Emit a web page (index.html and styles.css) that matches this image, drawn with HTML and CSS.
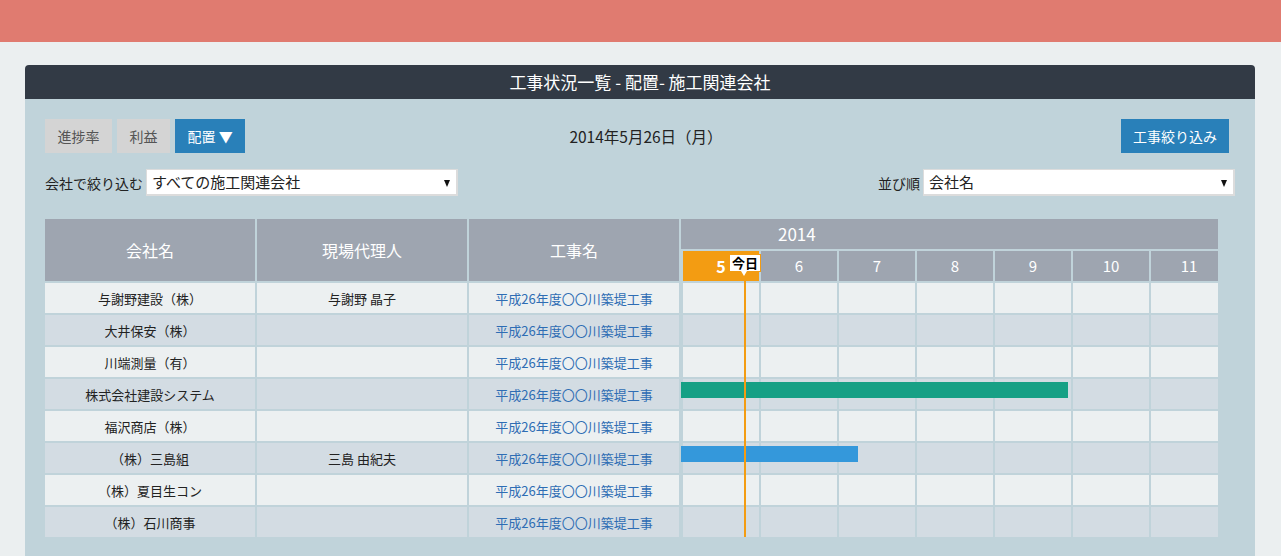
FILE: index.html
```html
<!DOCTYPE html>
<html lang="ja">
<head>
<meta charset="utf-8">
<title>工事状況一覧 - 配置- 施工関連会社</title>
<link rel="stylesheet" href="styles.css">
</head>
<body>
<header class="topbar"></header>
<main class="page">
  <section class="panel">
    <h1 class="panel-title">工事状況一覧 - 配置- 施工関連会社</h1>
    <div class="panel-body">
      <div class="toolbar">
        <div class="tabs">
          <button class="tab">進捗率</button>
          <button class="tab">利益</button>
          <button class="tab active">配置 ▼</button>
        </div>
        <div class="date">2014年5月26日（月）</div>
        <div class="tool-right"><button class="btn-primary">工事絞り込み</button></div>
      </div>
      <div class="filters">
        <div class="filter">
          <span class="filter-label">会社で絞り込む</span>
          <span class="select">すべての施工関連会社</span>
        </div>
        <div class="filter">
          <span class="filter-label">並び順</span>
          <span class="select">会社名</span>
        </div>
      </div>
      <div class="chart">
        <table class="grid">
          <colgroup><col class="c-name"><col class="c-agent"><col class="c-work"><col class="c-gantt"></colgroup>
          <thead>
            <tr>
              <th class="hcell">会社名</th>
              <th class="hcell">現場代理人</th>
              <th class="hcell">工事名</th>
              <th class="gantt-head">
                <div class="year">2014</div>
                <div class="months">
                  <div class="month current">5</div>
                  <div class="month">6</div>
                  <div class="month">7</div>
                  <div class="month">8</div>
                  <div class="month">9</div>
                  <div class="month">10</div>
                  <div class="month">11</div>
                </div>
              </th>
            </tr>
          </thead>
          <tbody>
            <tr class="odd"><td>与謝野建設（株）</td><td>与謝野 晶子</td><td class="work">平成26年度〇〇川築堤工事</td><td class="gantt"><div class="cells"><i></i><i></i><i></i><i></i><i></i><i></i><i></i></div></td></tr>
            <tr class="even"><td>大井保安（株）</td><td></td><td class="work">平成26年度〇〇川築堤工事</td><td class="gantt"><div class="cells"><i></i><i></i><i></i><i></i><i></i><i></i><i></i></div></td></tr>
            <tr class="odd"><td>川端測量（有）</td><td></td><td class="work">平成26年度〇〇川築堤工事</td><td class="gantt"><div class="cells"><i></i><i></i><i></i><i></i><i></i><i></i><i></i></div></td></tr>
            <tr class="even"><td>株式会社建設システム</td><td></td><td class="work">平成26年度〇〇川築堤工事</td><td class="gantt"><div class="cells"><i></i><i></i><i></i><i></i><i></i><i></i><i></i></div><div class="bar green" style="width:387px"></div></td></tr>
            <tr class="odd"><td>福沢商店（株）</td><td></td><td class="work">平成26年度〇〇川築堤工事</td><td class="gantt"><div class="cells"><i></i><i></i><i></i><i></i><i></i><i></i><i></i></div></td></tr>
            <tr class="even"><td>（株）三島組</td><td>三島 由紀夫</td><td class="work">平成26年度〇〇川築堤工事</td><td class="gantt"><div class="cells"><i></i><i></i><i></i><i></i><i></i><i></i><i></i></div><div class="bar blue" style="width:177px"></div></td></tr>
            <tr class="odd"><td>（株）夏目生コン</td><td></td><td class="work">平成26年度〇〇川築堤工事</td><td class="gantt"><div class="cells"><i></i><i></i><i></i><i></i><i></i><i></i><i></i></div></td></tr>
            <tr class="even"><td>（株）石川商事</td><td></td><td class="work">平成26年度〇〇川築堤工事</td><td class="gantt"><div class="cells"><i></i><i></i><i></i><i></i><i></i><i></i><i></i></div></td></tr>
          </tbody>
        </table>
        <div class="today-line"></div>
        <div class="today-badge">今日</div>
      </div>
    </div>
  </section>
</main>
</body>
</html>
```
FILE: styles.css
```css
* { box-sizing: border-box; }
html, body { margin: 0; padding: 0; }
body {
  background: #ebeff0;
  font-family: "Noto Sans CJK JP", "Noto Sans", sans-serif;
  color: #222;
  overflow: hidden;
}
.topbar {
  height: 42px;
  background: #e07b70;
}
.page {
  padding: 23px 26px 0 25px;
}
.panel {
  width: 1230px;
}
.panel-title {
  margin: 0;
  height: 34px;
  line-height: 34px;
  background: #323a45;
  color: #fff;
  font-size: 17px;
  font-weight: normal;
  text-align: center;
  border-radius: 4px 4px 0 0;
}
.panel-body {
  background: #c0d3da;
  padding: 20px 20px 20px 20px;
}
.toolbar {
  display: grid;
  grid-template-columns: 1fr auto 1fr;
  align-items: center;
  height: 34px;
}
.tabs {
  display: flex;
  gap: 5px;
}
button {
  font-family: inherit;
  border: none;
  margin: 0;
  cursor: pointer;
}
.tab {
  height: 34px;
  padding: 0 12.5px;
  background: #d4d4d4;
  color: #555;
  font-size: 14px;
  line-height: 34px;
}
.tab.active {
  background: #2980b9;
  color: #fff;
}
.date {
  font-size: 15.5px;
  color: #222;
  padding-left: 12px;
}
.tool-right {
  justify-self: end;
  padding-right: 6px;
}
.btn-primary {
  height: 34px;
  padding: 0 12px;
  background: #2980b9;
  color: #fff;
  font-size: 14px;
  line-height: 34px;
}
.filters {
  margin-top: 16px;
  display: flex;
  justify-content: space-between;
  align-items: center;
}
.filter {
  display: flex;
  align-items: center;
  gap: 3px;
}
.filter-label {
  font-size: 14px;
  color: #222;
}
.select {
  position: relative;
  display: block;
  width: 312px;
  height: 27px;
  line-height: 24px;
  background: #fff;
  border: 1px solid #dcdcdc;
  border-width: 1px 2px 2px 1px;
  padding-left: 5px;
  font-size: 15px;
  color: #222;
}
.select::after {
  content: "";
  position: absolute;
  right: 6px;
  top: 10px;
  border-top: 7px solid #111;
  border-left: 3.5px solid transparent;
  border-right: 3.5px solid transparent;
}
.chart {
  position: relative;
  margin: 21px 0 0 -2px;
  width: 1177px;
}
.grid {
  border-collapse: separate;
  border-spacing: 2px;
  table-layout: fixed;
  width: 1177px;
}
.c-name, .c-agent, .c-work { width: 210px; }
.c-gantt { width: 537px; }
.hcell {
  height: 62px;
  padding: 0;
  background: #9ea5b0;
  color: #fff;
  font-size: 16px;
  font-weight: normal;
  text-align: center;
}
.gantt-head {
  padding: 0;
  vertical-align: top;
  font-weight: normal;
}
.year {
  height: 30px;
  line-height: 29px;
  background: #9ea5b0;
  color: #fff;
  font-size: 17px;
  text-align: left;
  padding-left: 97px;
}
.months {
  margin-top: 2px;
  display: flex;
  gap: 2px;
  padding-left: 2px;
  height: 30px;
  overflow: hidden;
}
.month {
  flex: 0 0 76px;
  background: #9ea5b0;
  color: #fff;
  font-size: 15px;
  line-height: 30px;
  text-align: center;
}
.month.current {
  background: #f39c12;
  font-weight: bold;
  font-size: 16px;
}
.grid td {
  height: 30px;
  padding: 0;
  font-size: 13px;
  text-align: center;
  white-space: nowrap;
  color: #222;
}
.odd td { background: #ecf0f1; }
.even td { background: #d3dce3; }
.grid td.work { color: #2e6db4; }
.grid td.gantt {
  background: transparent;
  position: relative;
}
.cells {
  display: flex;
  gap: 2px;
  padding-left: 2px;
  height: 30px;
  overflow: hidden;
}
.cells i {
  flex: 0 0 76px;
  display: block;
}
.odd .cells i { background: #ecf0f1; }
.even .cells i { background: #d3dce3; }
.bar {
  position: absolute;
  left: 0;
  top: 3px;
  height: 16px;
}
.bar.green { background: #16a085; }
.bar.blue { background: #3498db; }
.today-line {
  position: absolute;
  left: 701px;
  top: 56px;
  bottom: 2px;
  width: 2px;
  background: #f39c12;
}
.today-badge {
  position: absolute;
  left: 686px;
  top: 37px;
  width: 32px;
  height: 18px;
  background: #fff;
  border: 1px solid #f39c12;
  color: #000;
  font-size: 13px;
  font-weight: bold;
  line-height: 16px;
  text-align: center;
}
.today-badge::after {
  content: "";
  position: absolute;
  left: 11px;
  bottom: -5px;
  border-top: 5px solid #fff;
  border-left: 3.5px solid transparent;
  border-right: 3.5px solid transparent;
}
```
